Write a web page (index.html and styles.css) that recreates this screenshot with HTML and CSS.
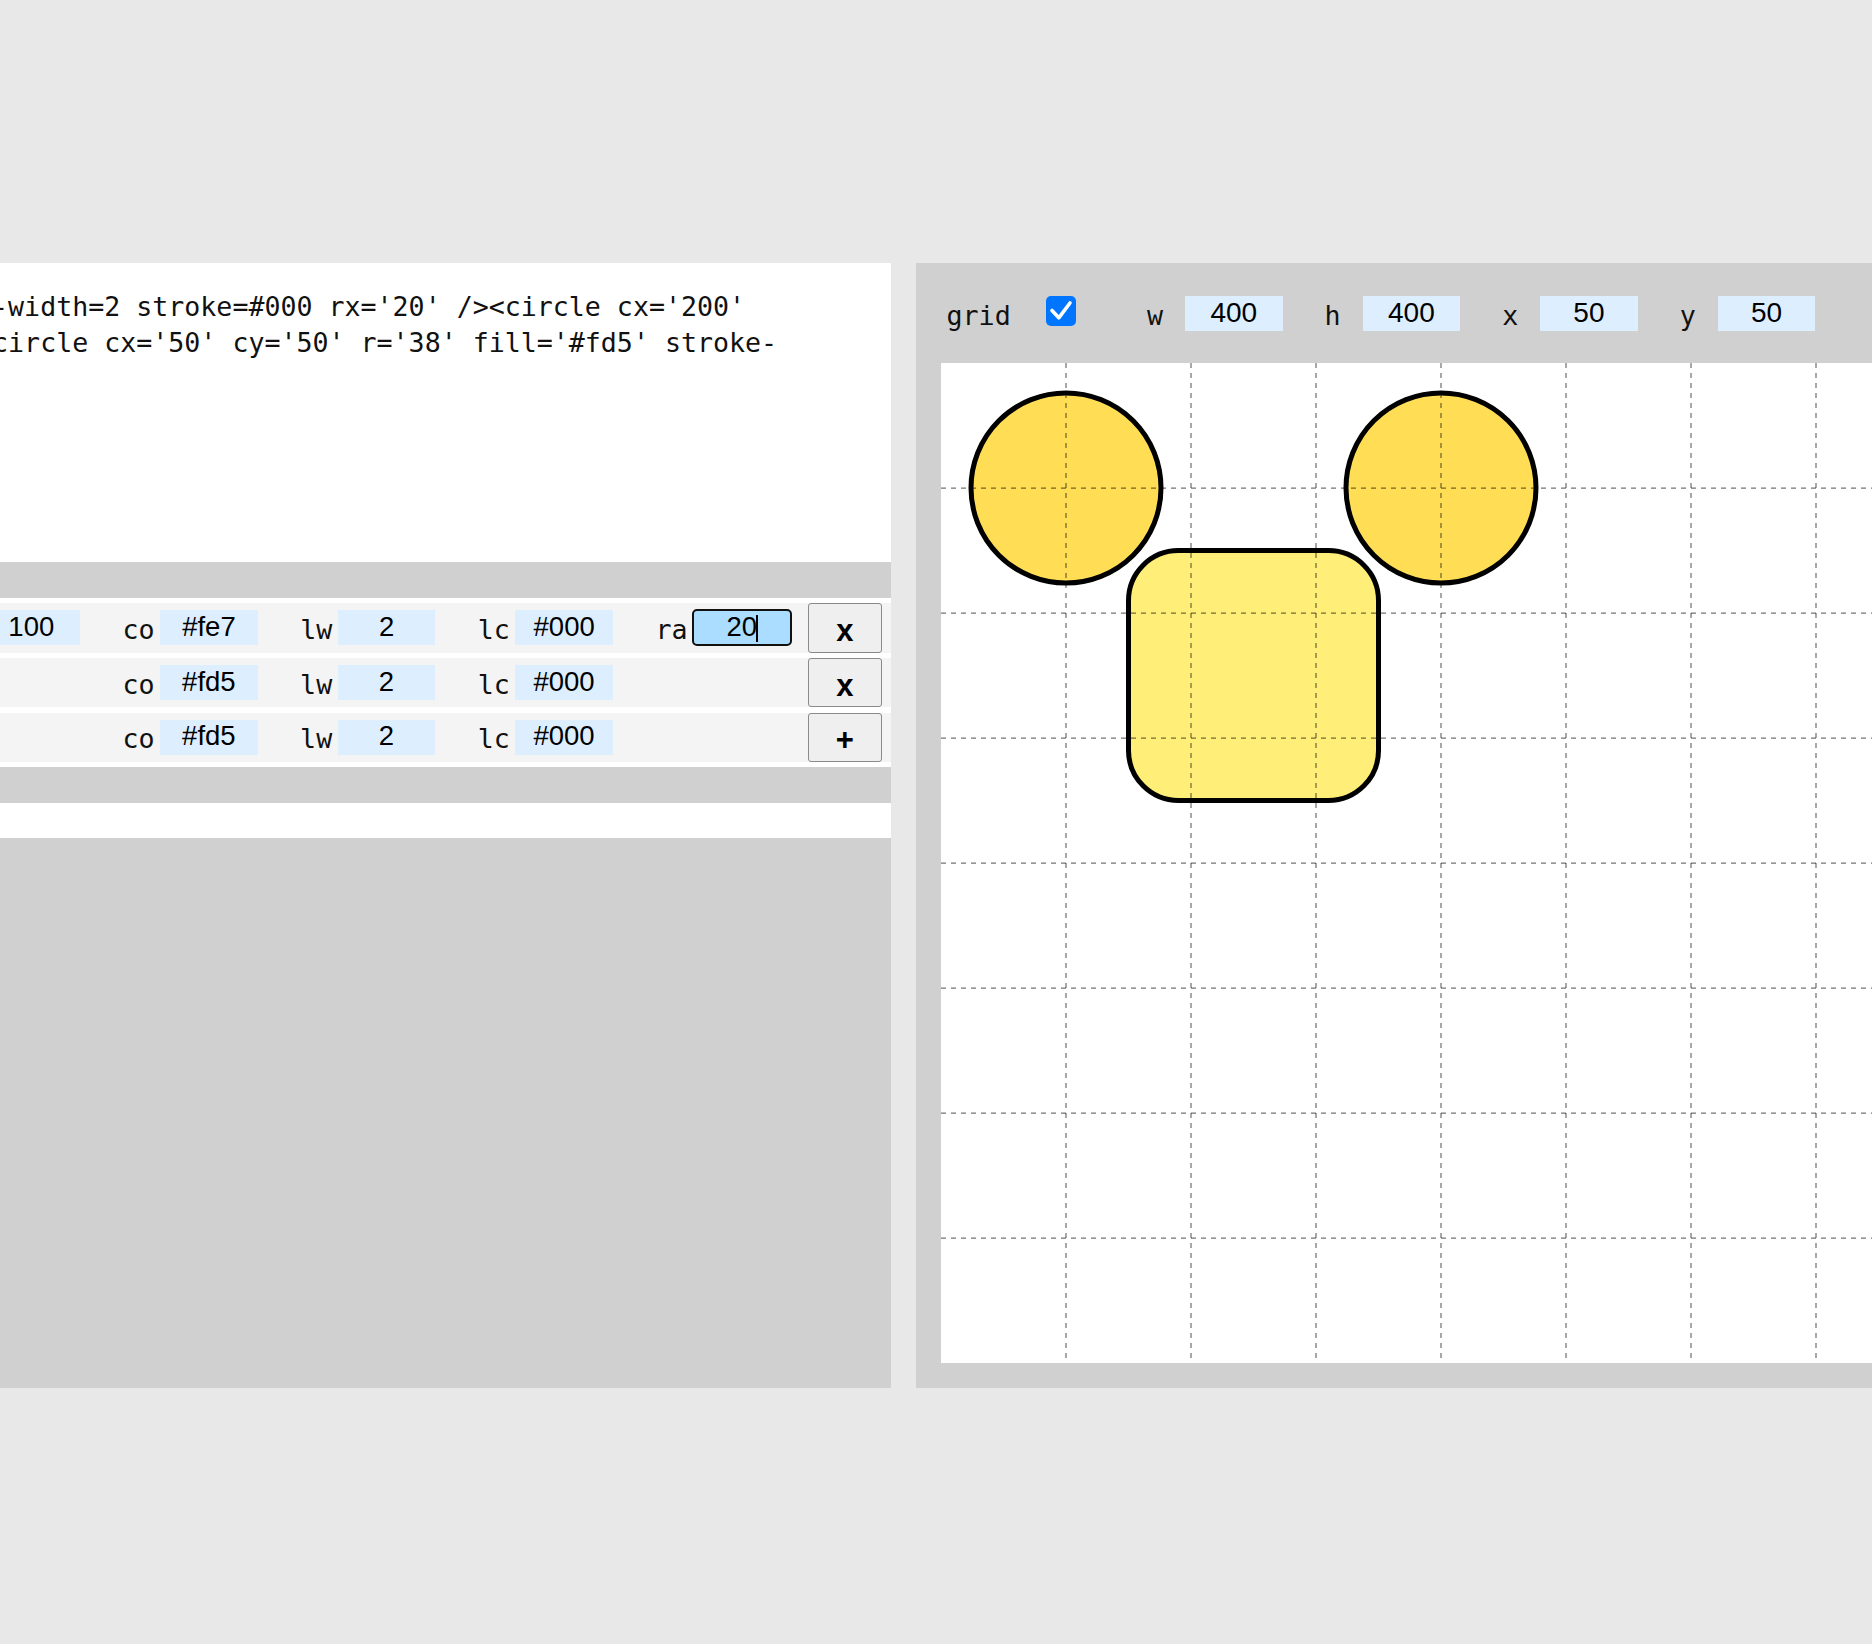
FILE: index.html
```html
<!DOCTYPE html>
<html lang="en">
<head>
<meta charset="utf-8">
<title>Shape editor</title>
<link rel="stylesheet" href="styles.css">
</head>
<body>
<div class="stage">
  <section class="editor">
    <textarea class="code" wrap="off" spellcheck="false">roke-width=2 stroke=#000 rx='20' /&gt;&lt;circle cx='200'
 /&gt;&lt;circle cx='50' cy='50' r='38' fill='#fd5' stroke-</textarea>
    <div class="shapes">
      <div class="shape-row">
        <div class="field"><span class="lbl">h</span><input class="val" value="100"></div>
        <div class="field"><span class="lbl">co</span><input class="val" value="#fe7"></div>
        <div class="field"><span class="lbl">lw</span><input class="val" value="2"></div>
        <div class="field"><span class="lbl">lc</span><input class="val" value="#000"></div>
        <div class="field"><span class="lbl">ra</span><span class="focus-wrap"><input class="val is-focused" value="20"></span></div>
        <button class="btn">x</button>
      </div>
      <div class="shape-row">
        <div class="spacer"></div>
        <div class="field"><span class="lbl">co</span><input class="val" value="#fd5"></div>
        <div class="field"><span class="lbl">lw</span><input class="val" value="2"></div>
        <div class="field"><span class="lbl">lc</span><input class="val" value="#000"></div>
        <button class="btn">x</button>
      </div>
      <div class="shape-row">
        <div class="spacer"></div>
        <div class="field"><span class="lbl">co</span><input class="val" value="#fd5"></div>
        <div class="field"><span class="lbl">lw</span><input class="val" value="2"></div>
        <div class="field"><span class="lbl">lc</span><input class="val" value="#000"></div>
        <button class="btn">+</button>
      </div>
    </div>
    <div class="status"></div>
  </section>

  <section class="viewer">
    <div class="toolbar">
      <span class="tlbl">grid</span>
      <label class="chk">
        <input type="checkbox" checked>
        <svg class="tick" viewBox="0 0 30 30" width="30" height="30"><path d="M6 14.5 L12.8 21.8 L24 7" fill="none" stroke="#fff" stroke-width="3.6" stroke-linecap="round" stroke-linejoin="round"/></svg>
      </label>
      <span class="tlbl tfield">w</span><input class="tval" value="400">
      <span class="tlbl tfield">h</span><input class="tval" value="400">
      <span class="tlbl tfield">x</span><input class="tval" value="50">
      <span class="tlbl tfield">y</span><input class="tval" value="50">
    </div>
    <svg class="canvas" viewBox="0 0 400 400" width="1000" height="1000">
      <rect x="0" y="0" width="400" height="400" fill="#fff"/>
      <rect x="75" y="75" width="100" height="100" rx="20" fill="#fe7" stroke="#000" stroke-width="2"/>
      <circle cx="200" cy="50" r="38" fill="#fd5" stroke="#000" stroke-width="2"/>
      <circle cx="50" cy="50" r="38" fill="#fd5" stroke="#000" stroke-width="2"/>
      <g class="grid" stroke="#000" stroke-opacity="0.55" stroke-width="0.5" stroke-dasharray="2 2">
        <line x1="50" y1="0" x2="50" y2="400"/>
        <line x1="100" y1="0" x2="100" y2="400"/>
        <line x1="150" y1="0" x2="150" y2="400"/>
        <line x1="200" y1="0" x2="200" y2="400"/>
        <line x1="250" y1="0" x2="250" y2="400"/>
        <line x1="300" y1="0" x2="300" y2="400"/>
        <line x1="350" y1="0" x2="350" y2="400"/>
        <line x1="0" y1="50" x2="400" y2="50"/>
        <line x1="0" y1="100" x2="400" y2="100"/>
        <line x1="0" y1="150" x2="400" y2="150"/>
        <line x1="0" y1="200" x2="400" y2="200"/>
        <line x1="0" y1="250" x2="400" y2="250"/>
        <line x1="0" y1="300" x2="400" y2="300"/>
        <line x1="0" y1="350" x2="400" y2="350"/>
      </g>
    </svg>
  </section>
</div>
</body>
</html>
```
FILE: styles.css
```css
html, body {
  margin: 0;
  padding: 0;
  background: #e8e8e8;
  overflow: hidden;
  height: 100%;
}

.stage {
  display: flex;
  justify-content: center;
  gap: 25px;
  padding-top: 263px;
  width: 100%;
  overflow: hidden;
}

/* ---------- left: editor ---------- */
.editor {
  flex: 0 0 985px;
  width: 985px;
  height: 1125px;
  background: #d0d0d0;
  display: flex;
  flex-direction: column;
}

.code {
  display: block;
  box-sizing: border-box;
  width: 100%;
  height: 299px;
  margin: 0;
  padding: 26px 26.67px 0 22px;
  border: none;
  outline: none;
  resize: none;
  overflow: hidden;
  background: #fff;
  color: #111;
  font-family: "DejaVu Sans Mono", "Liberation Mono", monospace;
  font-size: 26.62px;
  line-height: 35.5px;
  white-space: pre;
}

.shapes {
  margin-top: 36px;
  background: #fff;
  padding: 5.33px 0;
  display: flex;
  flex-direction: column;
  gap: 5.33px;
}

.shape-row {
  height: 49.33px;
  background: #f4f4f4;
  display: flex;
  align-items: center;
  padding: 0 9px 0 12.5px;
}

.spacer {
  width: 161.5px;
  flex: 0 0 161.5px;
}

.field {
  display: flex;
  align-items: center;
  margin-left: 42.5px;
}

.lbl {
  font-family: "DejaVu Sans Mono", "Liberation Mono", monospace;
  font-size: 26.67px;
  color: #111;
  margin-right: 5.5px;
  padding-top: 3px;
  white-space: pre;
}

.val {
  box-sizing: border-box;
  width: 97.5px;
  height: 35px;
  margin: 0;
  padding: 0 0 2px;
  border: none;
  outline: none;
  background: #def;
  color: #000;
  font-family: "Liberation Sans", Arial, sans-serif;
  font-size: 27.5px;
  text-align: center;
}

.focus-wrap {
  position: relative;
  display: block;
}

.focus-wrap::after {
  content: "";
  position: absolute;
  left: 63px;
  top: 5px;
  width: 1.6px;
  height: 27px;
  background: #000;
}

.val.is-focused {
  background: #adf;
  border-radius: 4px;
  outline: 2px solid #111;
  outline-offset: -1px;
}

.btn {
  margin-left: auto;
  box-sizing: border-box;
  width: 74.5px;
  height: 49.33px;
  padding: 5px 0 0;
  background: #efefef;
  border: 1px solid #8a8a8a;
  border-radius: 3px;
  color: #000;
  font-family: "Liberation Sans", Arial, sans-serif;
  font-weight: bold;
  font-size: 31px;
  line-height: 1;
}

.status {
  margin-top: 35.5px;
  height: 35.2px;
  background: #fff;
}

/* ---------- right: viewer ---------- */
.viewer {
  flex: 0 0 1050px;
  width: 1050px;
  height: 1125px;
  box-sizing: border-box;
  padding: 0 25px 25px;
  background: #d0d0d0;
  display: flex;
  flex-direction: column;
}

.toolbar {
  height: 100px;
  display: flex;
  align-items: center;
  padding-left: 5.5px;
}

.tlbl {
  font-family: "DejaVu Sans Mono", "Liberation Mono", monospace;
  font-size: 26.67px;
  color: #111;
  padding-top: 5px;
}

.tfield {
  margin-left: 42px;
}

.chk {
  position: relative;
  display: block;
  width: 30px;
  height: 30px;
  margin-left: 35.3px;
  margin-right: 29px;
  margin-bottom: 4px;
}

.chk input {
  -webkit-appearance: none;
  appearance: none;
  display: block;
  width: 30px;
  height: 30px;
  margin: 0;
  border: none;
  border-radius: 5px;
  background: #0075ff;
}

.tick {
  position: absolute;
  left: 0;
  top: 0;
  pointer-events: none;
}

.tval {
  box-sizing: border-box;
  width: 97.5px;
  height: 35px;
  margin: 0 0 0 22px;
  padding: 0;
  border: none;
  outline: none;
  background: #def;
  color: #000;
  font-family: "Liberation Sans", Arial, sans-serif;
  font-size: 28px;
  text-align: center;
}

.canvas {
  display: block;
  flex: 0 0 auto;
  width: 1000px;
  height: 1000px;
  background: #fff;
}
```
